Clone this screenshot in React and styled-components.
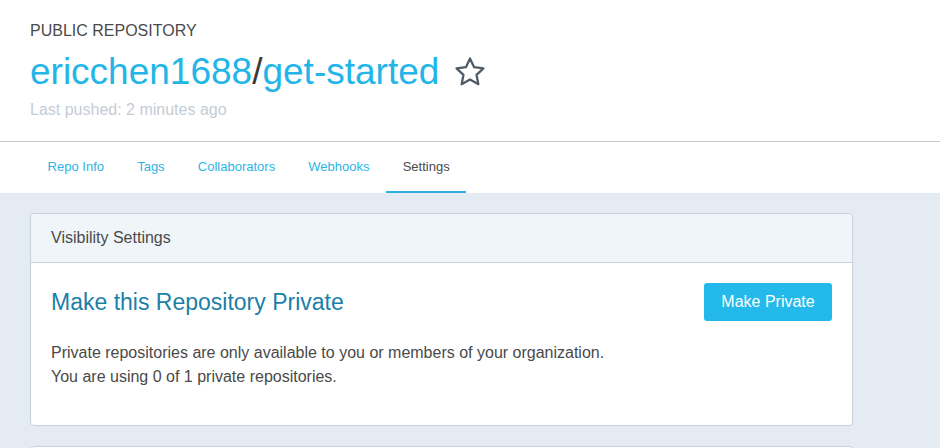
import styled, { createGlobalStyle } from 'styled-components'

const GlobalStyle = createGlobalStyle`
    * {
        box-sizing: border-box;
    }

    body {
        margin: 0;
        font-family: "Liberation Sans", Arial, sans-serif;
        background: #e5ebf3;
    }
`

const abas = ["Repo Info", "Tags", "Collaborators", "Webhooks", "Settings"]

export default function App() {
    return (
        <>
            <GlobalStyle />
            <Page>
                <Header>
                    <Tipo>PUBLIC REPOSITORY</Tipo>
                    <Titulo>
                        <a>ericchen1688</a>
                        <Barra>/</Barra>
                        <a>get-started</a>
                        <Estrela viewBox="0 0 24 24">
                            <path d="M12 2.5l2.9 6.1 6.6.8-4.9 4.6 1.3 6.6L12 17.3l-5.9 3.3 1.3-6.6-4.9-4.6 6.6-.8z" />
                        </Estrela>
                    </Titulo>
                    <Ultimo>Last pushed: 2 minutes ago</Ultimo>
                </Header>

                <Abas>
                    {abas.map(aba => (
                        <Aba key={aba} ativa={aba === "Settings"}>{aba}</Aba>
                    ))}
                </Abas>

                <Conteudo>
                    <Card>
                        <CardTopo>Visibility Settings</CardTopo>
                        <CardCorpo>
                            <Linha>
                                <h3>Make this Repository Private</h3>
                                <Botao>Make Private</Botao>
                            </Linha>
                            <Texto>
                                Private repositories are only available to you or members of your organization.
                                <br />
                                You are using 0 of 1 private repositories.
                            </Texto>
                        </CardCorpo>
                    </Card>
                    <Card />
                </Conteudo>
            </Page>
        </>
    )
}

const Page = styled.div`
    width: 940px;
    height: 448px;
    overflow: hidden;
    background: #e5ebf3;
`

const Header = styled.header`
    padding: 21px 30px 0 30px;
    height: 142px;
    background: #FFFFFF;
    border-bottom: 1px solid #c4c9d0;
`

const Tipo = styled.p`
    margin: 0;
    font-size: 16px;
    line-height: 20px;
    color: #4a4a4a;
`

const Titulo = styled.h1`
    margin: 9px 0 0 0;
    height: 44px;
    display: flex;
    align-items: center;

    font-weight: 400;
    font-size: 37px;
    line-height: 44px;
    color: #23b5e8;

    a {
        color: #23b5e8;
    }
`

const Barra = styled.span`
    color: #3a3a3a;
`

const Estrela = styled.svg`
    width: 34px;
    height: 34px;
    margin-left: 14px;

    fill: none;
    stroke: #505b68;
    stroke-width: 1.6;
    stroke-linejoin: round;
`

const Ultimo = styled.p`
    margin: 6px 0 0 0;
    font-size: 16px;
    line-height: 20px;
    color: #c5ccd6;
`

const Abas = styled.nav`
    display: flex;
    padding-left: 31px;
    height: 51px;
    background: #FFFFFF;
`

const Aba = styled.div`
    padding: 0 16.6px;
    display: flex;
    align-items: center;

    font-size: 13px;
    color: ${props => props.ativa ? "#4a4a4a" : "#2fb4e6"};
    border-bottom: 2px solid ${props => props.ativa ? "#2fb0e0" : "transparent"};
`

const Conteudo = styled.main`
    padding: 20px 87px 0 30px;
    display: flex;
    flex-direction: column;
    gap: 20px;
`

const Card = styled.section`
    min-height: 40px;
    background: #FFFFFF;
    border: 1px solid #c8d0dc;
    border-radius: 4px;
`

const CardTopo = styled.div`
    height: 49px;
    padding: 0 20px;
    display: flex;
    align-items: center;

    font-size: 16px;
    color: #4a4a4a;
    background: #f0f5fa;
    border-bottom: 1px solid #c8d0dc;
    border-radius: 4px 4px 0 0;
`

const CardCorpo = styled.div`
    padding: 20px 20px 36px 20px;
`

const Linha = styled.div`
    display: flex;
    justify-content: space-between;
    align-items: center;

    h3 {
        margin: 0;
        font-weight: 400;
        font-size: 23px;
        color: #1c7fa8;
    }
`

const Botao = styled.button`
    width: 128px;
    height: 38px;

    font-family: inherit;
    font-size: 16px;
    color: #FFFFFF;
    background: #23b9ea;
    border: none;
    border-radius: 3px;
`

const Texto = styled.p`
    margin: 20px 0 0 0;
    font-size: 16px;
    line-height: 24px;
    color: #4a4a4a;
`
